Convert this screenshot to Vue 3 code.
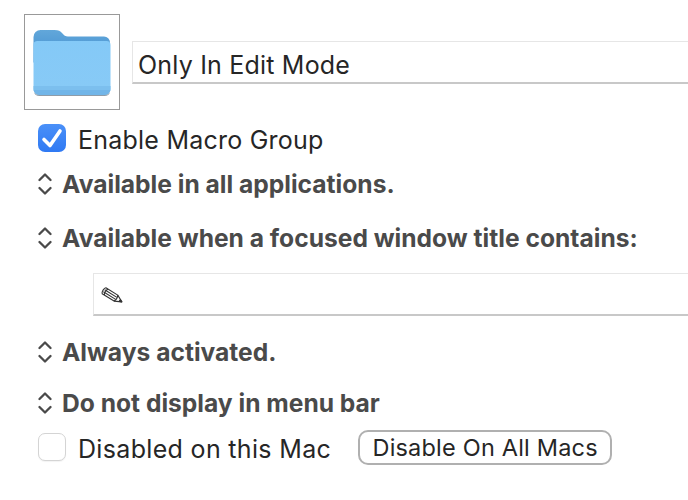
<template>
  <div class="panel">
    <div class="head">
      <div class="well">
        <svg width="78" height="66" viewBox="0 0 78 66">
          <defs>
            <linearGradient id="back" x1="0" y1="0" x2="0" y2="1">
              <stop offset="0" stop-color="#62a7da" />
              <stop offset="1" stop-color="#3f8ccf" />
            </linearGradient>
            <linearGradient id="front" x1="0" y1="0" x2="0" y2="1">
              <stop offset="0" stop-color="#84c9f7" />
              <stop offset="1" stop-color="#88caf6" />
            </linearGradient>
          </defs>
          <path d="M0.500 7a7 7 0 0 1 7-7h14c4 0 6 1 7.500 3 2 2.500 3.500 3.500 6 3.500h36a6 6 0 0 1 6 6v20H0.500z" fill="url(#back)" />
          <path d="M0.500 15a4 4 0 0 1 4-4h69a4 4 0 0 1 4 4v44a6 6 0 0 1-6 6H6.500a6 6 0 0 1-6-6z" fill="url(#front)" />
          <path d="M0.500 56h77v3a6 6 0 0 1-6 6H6.500a6 6 0 0 1-6-6z" fill="#7cbfee" />
          <path d="M0.500 60h77v-1a6 6 0 0 1-6 6H6.500a6 6 0 0 1-6-6z" fill="#71b5e8" />
          <path d="M1 62c1 2 3 3 5.500 3h65c2.500 0 4.500-1 5.500-3-.5 2.500-2.500 4-5.500 4h-65c-3 0-5-1.500-5.500-4z" fill="#8f9ca8" />
        </svg>
      </div>
      <div class="field title">Only In Edit Mode</div>
    </div>

    <label class="check first">
      <span class="box on">
        <svg width="28" height="28" viewBox="0 0 28 28">
          <path d="M6 15.500l6 6 10-14.500" fill="none" stroke="#fff" stroke-width="3.600" stroke-linecap="round" stroke-linejoin="round" />
        </svg>
      </span>
      <span>Enable Macro Group</span>
    </label>

    <div v-for="row in topRows" :key="row.text" class="select" :style="{ marginTop: row.gap + 'px' }">
      <svg class="updown" width="16" height="22" viewBox="0 0 16 22">
        <path d="M2.500 7l5.500-5.500 5.500 5.500M2.500 15l5.500 5.500 5.500-5.500" fill="none" stroke="#4a4a4a" stroke-width="2.300" stroke-linecap="round" stroke-linejoin="round" />
      </svg>
      <span>{{ row.text }}</span>
    </div>

    <div class="field pattern">
      <svg width="25" height="18" viewBox="0 0 25 18">
        <g transform="translate(12.500 9) rotate(32)" fill="none" stroke="#333" stroke-width="1.100" stroke-linejoin="round">
          <path d="M-10 -3.500h14l7 3.500-7 3.500h-14c-1.500-1-1.500-6 0-7z" fill="#fff" />
          <path d="M-10 -1.200h14M-10 1.200h14M4 -3.500c1.200 2.300 1.200 4.700 0 7M-7.500 -3.500c-1.200 2.300-1.200 4.700 0 7" />
          <path d="M8.500 -1.200l2.500 1.200-2.500 1.200z" fill="#333" />
        </g>
      </svg>
    </div>

    <div v-for="row in bottomRows" :key="row.text" class="select" :style="{ marginTop: row.gap + 'px' }">
      <svg class="updown" width="16" height="22" viewBox="0 0 16 22">
        <path d="M2.500 7l5.500-5.500 5.500 5.500M2.500 15l5.500 5.500 5.500-5.500" fill="none" stroke="#4a4a4a" stroke-width="2.300" stroke-linecap="round" stroke-linejoin="round" />
      </svg>
      <span>{{ row.text }}</span>
    </div>

    <div class="foot">
      <label class="check lower">
        <span class="box"></span>
        <span>Disabled on this Mac</span>
      </label>
      <button class="btn">Disable On All Macs</button>
    </div>
  </div>
</template>

<script setup>
const topRows = [
  { text: 'Available in all applications.', gap: 15 },
  { text: 'Available when a focused window title contains:', gap: 28 }
]
const bottomRows = [
  { text: 'Always activated.', gap: 23 },
  { text: 'Do not display in menu bar', gap: 25 }
]
</script>

<style>
html, body {
  margin: 0;
  background: #fff;
  overflow: hidden;
}
</style>

<style scoped>
.panel {
  width: 688px;
  height: 500px;
  box-sizing: border-box;
  padding: 14px 0 0 24px;
  background: #fff;
  font-family: Inter, "Liberation Sans", sans-serif;
  color: #262626;
  overflow: hidden;
}
.head {
  display: flex;
  align-items: flex-start;
  gap: 12px;
}
.well {
  width: 96px;
  height: 96px;
  box-sizing: border-box;
  border: 1px solid #999;
  display: flex;
  align-items: center;
  justify-content: center;
  flex: none;
}
.well svg {
  margin-top: 1px;
}
.field {
  box-sizing: border-box;
  height: 43px;
  border-top: 1px solid #e6e6e6;
  border-left: 1px solid #e6e6e6;
  border-bottom: 2px solid #c8c8c8;
  background: #fff;
}
.title {
  flex: 1;
  margin-top: 27px;
  padding-left: 5px;
  font-size: 25px;
  line-height: 46px;
  letter-spacing: 0.2px;
  white-space: nowrap;
}
.check {
  display: flex;
  align-items: flex-start;
  gap: 12px;
  font-size: 25px;
  line-height: 32px;
  letter-spacing: 0.23px;
}
.first {
  margin: 14px 0 0 14px;
}
.lower {
  margin-top: 3px;
  letter-spacing: 0.33px;
}
.box {
  width: 28px;
  height: 28px;
  box-sizing: border-box;
  border-radius: 7px;
  border: 1px solid #d4d4d4;
  background: #fff;
  box-shadow: 0 1px 1px rgba(0, 0, 0, 0.05);
  flex: none;
}
.box.on {
  border: 0;
  background: linear-gradient(#4a90f8, #2f79f3);
  box-shadow: none;
}
.box svg {
  display: block;
}
.select {
  display: flex;
  align-items: center;
  gap: 9px;
  margin-left: 13px;
  height: 26px;
  font-size: 24.600px;
  font-weight: 700;
  color: #4a4a4a;
  white-space: nowrap;
}
.updown {
  flex: none;
}
.pattern {
  display: flex;
  align-items: center;
  margin: 22px 0 0 69px;
  padding: 4px 0 0 6px;
  overflow: hidden;
}
.foot {
  display: flex;
  align-items: flex-start;
  gap: 27px;
  margin: 14px 0 0 14px;
}
.btn {
  box-sizing: border-box;
  width: 254px;
  height: 35px;
  padding: 0;
  border: 2px solid #b0b0b0;
  border-radius: 10px;
  background: #fff;
  color: #262626;
  font-family: inherit;
  font-size: 23.500px;
  letter-spacing: 0.2px;
  line-height: 30px;
}
</style>
